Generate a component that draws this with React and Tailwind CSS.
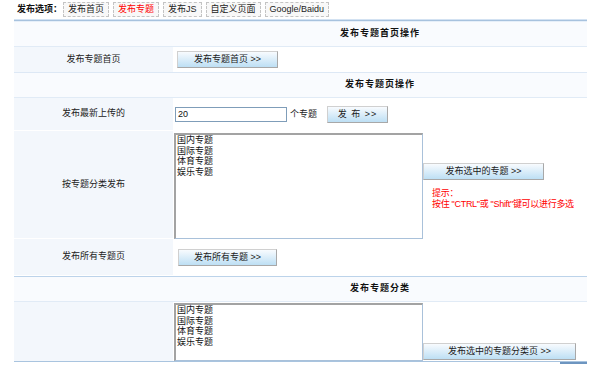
import React from 'react';

const btn = "h-[17px] border border-[#d0d0d0] border-r-[#a8a8a8] border-b-[#a8a8a8] bg-linear-to-b from-[#f8fbfe] to-[#bddff4] text-[9px] text-[#1a1a1a] flex items-center justify-center leading-none";
const topics = ['国内专题', '国际专题', '体育专题', '娱乐专题'];

function Tab({ children, active }) {
    return (
        <div className={"h-[15px] px-[4px] border border-dashed border-[#c4c4c4] bg-[#f8f8f8] flex items-center text-[9px] leading-none " + (active ? "text-[#ff0000]" : "text-[#222]")}>
            {children}
        </div>
    );
}

function Header({ children }) {
    return (
        <div className="h-[24px] bg-[#f9fbfe] flex items-center">
            <div className="w-[159px]"></div>
            <div className="flex-1 text-center font-bold text-[9px] tracking-[1px] text-[#111]">{children}</div>
        </div>
    );
}

function ListBox({ h }) {
    return (
        <div className={"w-[249px] bg-white border border-t-2 border-l-2 border-t-[#a3a3a3] border-l-[#a3a3a3] border-r-[#a9c1da] border-b-[#a9c1da] pl-[1px] " + h}>
            {topics.map((t) => (
                <div key={t} className="text-[9px] leading-[10.5px] text-[#111]">{t}</div>
            ))}
        </div>
    );
}

export default function App() {
    return (
        <div className="w-[605px] h-[385px] bg-white text-[#222] font-['Liberation_Sans','Noto_Sans_CJK_SC',sans-serif]">
            <div className="h-[19px] flex items-center pl-[17px]">
                <div className="w-[46px] whitespace-nowrap font-bold text-[9px] text-[#111] leading-none">发布选项：</div>
                <div className="flex gap-[4px]">
                    <Tab>发布首页</Tab>
                    <Tab active>发布专题</Tab>
                    <Tab>发布JS</Tab>
                    <Tab>自定义页面</Tab>
                    <Tab>Google/Baidu</Tab>
                </div>
            </div>

            <div className="ml-[14px] w-[573px]">
                <div className="h-px bg-[#d3e2f2]"></div>
                <div className="h-px bg-[#a7c2de]"></div>
                <div className="h-px bg-[#e6eff9]"></div>

                <Header>发布专题首页操作</Header>
                <div className="h-px bg-[#e1ebf6]"></div>

                <div className="h-[25px] flex">
                    <div className="w-[159px] bg-[#f3f7fc] flex items-center justify-center text-[9px]">发布专题首页</div>
                    <div className="flex-1 flex items-center pl-[4px]">
                        <button className={btn + " w-[101px]"}>发布专题首页 &gt;&gt;</button>
                    </div>
                </div>
                <div className="h-px bg-[#dde8f5]"></div>

                <Header>发布专题页操作</Header>
                <div className="h-px bg-[#e1ebf6]"></div>

                <div className="h-[33px] flex border-b border-white">
                    <div className="w-[159px] bg-[#f3f7fc] flex items-center justify-center text-[9px]">发布最新上传的</div>
                    <div className="flex-1 flex items-center pl-[2px]">
                        <input type="text" defaultValue="20" className="w-[112px] h-[15px] border border-[#7f9db9] px-[2px] text-[9px] text-[#111] outline-none" />
                        <span className="ml-[3px] mt-[2px] text-[9px]">个专题</span>
                        <button className={btn + " w-[61px] ml-[10px] tracking-[1px]"}>发 布 &gt;&gt;</button>
                    </div>
                </div>

                <div className="h-[108px] flex border-b border-white">
                    <div className="w-[159px] bg-[#f3f7fc] flex items-center justify-center text-[9px]">按专题分类发布</div>
                    <div className="flex-1 flex pl-[1px] pt-[2px]">
                        <ListBox h="h-[106px]" />
                        <div className="flex flex-col pt-[30px]">
                            <button className={btn + " w-[121px]"}>发布选中的专题 &gt;&gt;</button>
                            <div className="pl-[9px] pt-[8px] text-[9px] leading-[10.5px] tracking-[-0.3px] text-[#ff0000]">
                                <div>提示：</div>
                                <div>按住 "CTRL"或 "Shift"键可以进行多选</div>
                            </div>
                        </div>
                    </div>
                </div>

                <div className="h-[36px] flex">
                    <div className="w-[159px] bg-[#f3f7fc] flex items-center justify-center text-[9px]">发布所有专题页</div>
                    <div className="flex-1 flex items-center pl-[5px]">
                        <button className={btn + " w-[99px]"}>发布所有专题 &gt;&gt;</button>
                    </div>
                </div>
                <div className="h-px bg-white"></div>
                <div className="h-px bg-[#bcd3ea]"></div>

                <Header>发布专题分类</Header>
                <div className="h-px bg-[#e1ebf6]"></div>

                <div className="h-[59px] flex">
                    <div className="w-[159px] bg-[#f3f7fc]"></div>
                    <div className="flex-1 flex pl-[1px] pt-[1px]">
                        <ListBox h="h-[58px]" />
                        <div className="flex flex-col justify-end pb-[1px]">
                            <button className={btn + " w-[153px]"}>发布选中的专题分类页 &gt;&gt;</button>
                        </div>
                    </div>
                </div>
                <div className="flex">
                    <div className="flex-1 h-px bg-[#a9c4df]"></div>
                </div>
                <div className="flex justify-end">
                    <div className="w-[27px] h-[2px] bg-[#6d95c0]"></div>
                </div>
            </div>
        </div>
    );
}
